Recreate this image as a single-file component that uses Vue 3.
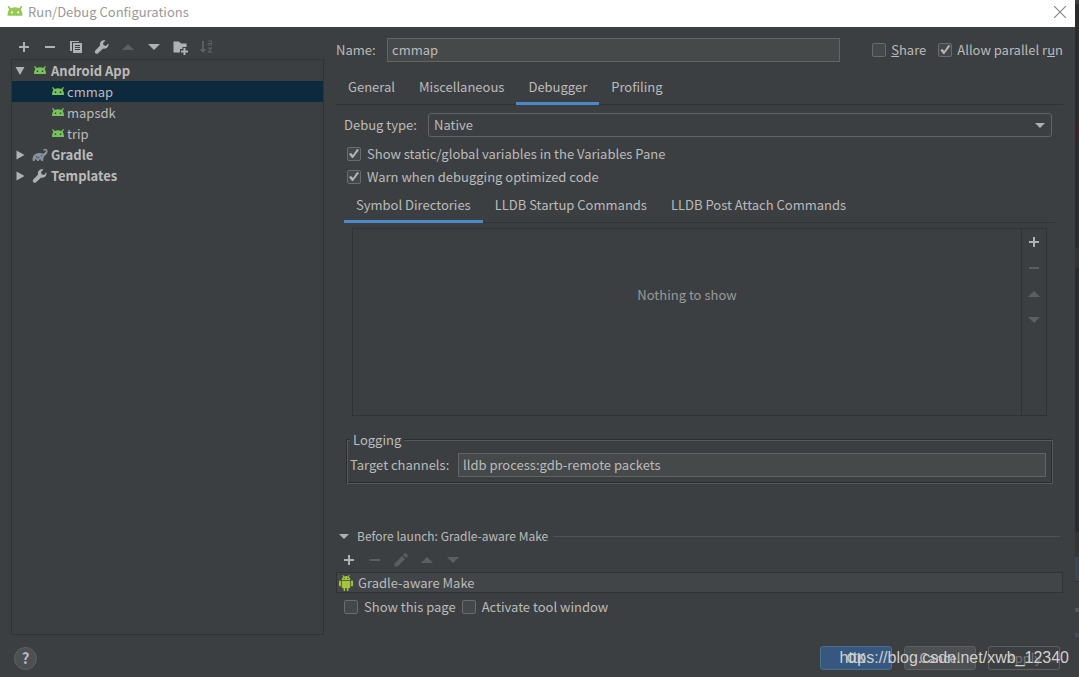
<script setup>
import { h, ref } from 'vue'

const shapes = {
  plus: 'M7 3h2v4h4v2H9v4H7V9H3V7h4z',
  minus: 'M3 7h10v2H3z',
  copy: 'M2 2h9v1H4v9H2zM5 4h9v10H5zM7 6v1h5V6zM7 8v1h5V8zM7 10v1h5v-1z',
  wrench: 'M14.500 4.600l-2.600 2.300-2.300-.7-.6-2.300L11.500 1.400C9.800 1 8.100 1.400 7 2.500 5.900 3.600 5.600 5.200 6.100 6.600L1.300 11.600c-.7.8-.6 1.900.1 2.600.7.700 1.900.7 2.600 0L9.200 9.400c1.400.5 3 .2 4.100-.9 1-1 1.500-2.500 1.200-3.900z',
  up: 'M2 11l6-6 6 6z',
  down: 'M2 5h12l-6 6z',
  folder: 'M1.500 2.500H7l2 2h5.500V8h-4v2H8v3.500H1.500zM11.500 9h2v2.500H16v2h-2.500V16h-2v-2.500H9v-2h2.500z',
  sort: 'M4 2h2v8h2.500L5 14 1.500 10H4zM10 2.500V1.500h3.500l.5.5v4.500h-3.500L9.500 6V4.500L10 4h3V2.500zM10.800 5v.7H13V5zM9.800 8.500H14v1.200L11.500 12.500H14v1.200H9.800v-1.200l2.500-2.800H9.800z',
  edit: 'M1.500 11.500l7.500-7.500 3 3-7.500 7.500h-3zM10 3l1.500-1.500c.5-.5 1-.5 1.500 0L14.500 3c.5.500.5 1 0 1.500L13 6z',
  android: 'M2 3.500l.9-.5 1.900 2A7.500 7.500 0 0 1 8 4.300a7.500 7.500 0 0 1 3.200.7l1.900-2 .9.500-1.400 2.500C13.600 7.200 14 9 14 11H2c0-2 .4-3.800 1.400-5zM4.800 7.500V9h1.400V7.500zM9.800 7.500V9h1.400V7.500z',
  gradle: 'M.7 14c-.5-3 .3-5.700 2.600-7 2.200-1.200 4.800-1.200 6.800-.5 1.500.4 2.300-.5 3.200-1.500.8-.9.7-1.700 0-1.700-.6 0-1 .3-1.300.6L11 3c1.300-1.500 3.400-1.500 4.200-.3 1 1.800-.2 4-1.800 5.500-.8.7-1.500 1.300-1.800 2.300-.3 1-.4 2.300-.5 3.500H9.200c0-1-.4-1.700-1.200-1.700S6.900 13 6.900 14H5c0-1-.4-1.700-1.200-1.700S2.600 13 2.600 14zM9 8.200v1h1.200v-1zM3.600 9.300l1.600 1.900 2.500-.4-.2-.5-2 .2L4.200 9z',
  robot: 'M4.200 0h.9l.9 1.400a5 5 0 0 1 4 0L10.900 0h.9l-1 1.900C11.800 2.600 12.300 3.500 12.300 5H3.700c0-1.500.5-2.400 1.500-3.100zM5.700 3v1h1V3zM9.300 3v1h1V3zM3.700 5.700h8.600v6.500c0 .5-.3.800-.8.800h-1v2.200c0 1-1.700 1-1.700 0V13H7.200v2.200c0 1-1.700 1-1.700 0V13h-1c-.5 0-.8-.3-.8-.8zM1 6.500c0-1.200 1.900-1.200 1.900 0v4c0 1.200-1.900 1.200-1.900 0zM13.100 6.500c0-1.200 1.900-1.200 1.900 0v4c0 1.200-1.900 1.200-1.900 0z',
  opened: 'M3.500 4h9L8 12z',
  closed: 'M4.500 3.500l8 4.500-8 4.500z',
  caret: 'M3 6h10l-5 5z'
}
const Icon = (props) =>
  h('svg', { class: 'icon', viewBox: '0 0 16 16', 'aria-hidden': 'true' }, [
    h('path', { d: shapes[props.name], 'fill-rule': 'evenodd' })
  ])
Icon.props = ['name']

const treeTools = [
  { icon: 'plus', label: 'Add' },
  { icon: 'minus', label: 'Remove' },
  { icon: 'copy', label: 'Copy' },
  { icon: 'wrench', label: 'Edit templates' },
  { icon: 'up', label: 'Move up', off: true },
  { icon: 'down', label: 'Move down' },
  { icon: 'folder', label: 'New folder' },
  { icon: 'sort', label: 'Sort', off: true }
]
const listTools = [
  { icon: 'plus', label: 'Add' },
  { icon: 'minus', label: 'Remove', off: true },
  { icon: 'up', label: 'Move up', off: true },
  { icon: 'down', label: 'Move down', off: true }
]
const taskTools = [...listTools.slice(0, 2), { icon: 'edit', label: 'Edit', off: true }, ...listTools.slice(2)]

const tree = [
  { text: 'Android App', icon: 'android', arrow: 'opened' },
  { text: 'cmmap', icon: 'android', child: true },
  { text: 'mapsdk', icon: 'android', child: true },
  { text: 'trip', icon: 'android', child: true },
  { text: 'Gradle', icon: 'gradle', arrow: 'closed' },
  { text: 'Templates', icon: 'wrench', arrow: 'closed' }
]
const selected = ref('cmmap')
const tabs = ['General', 'Miscellaneous', 'Debugger', 'Profiling']
const tab = ref('Debugger')
const subTabs = ['Symbol Directories', 'LLDB Startup Commands', 'LLDB Post Attach Commands']
const subTab = ref('Symbol Directories')
const name = ref('cmmap')
const channels = ref('lldb process:gdb-remote packets')
const share = ref(false)
const parallel = ref(true)
const showStatics = ref(true)
const warn = ref(true)
const showPage = ref(false)
const activate = ref(false)
</script>

<template>
  <div class="desktop">
    <div class="dialog">
      <header class="titlebar">
        <Icon name="android" class="logo" />
        <span class="title">Run/Debug Configurations</span>
        <button class="close" aria-label="Close">
          <svg viewBox="0 0 12 12" aria-hidden="true"><path d="M1 1l10 10M11 1L1 11" /></svg>
        </button>
      </header>

      <main class="body">
        <aside class="side">
          <div class="tools">
            <button v-for="t in treeTools" :key="t.icon" class="tool" :disabled="t.off" :aria-label="t.label">
              <Icon :name="t.icon" />
            </button>
          </div>
          <ul class="tree">
            <li v-for="n in tree" :key="n.text">
              <button
                class="node"
                :class="{ child: n.child, selected: selected === n.text }"
                @click="selected = n.text"
              >
                <Icon v-if="n.arrow" :name="n.arrow" class="arrow" />
                <Icon :name="n.icon" :class="n.icon" />
                <span>{{ n.text }}</span>
              </button>
            </li>
          </ul>
        </aside>

        <section class="form">
          <div class="name-row">
            <label for="name">Name:</label>
            <input id="name" v-model="name" class="field" type="text" />
            <label class="check share"><input v-model="share" type="checkbox" /><span><u>S</u>hare</span></label>
            <label class="check"><input v-model="parallel" type="checkbox" /><span>Allow parallel r<u>u</u>n</span></label>
          </div>

          <nav class="tabs">
            <button v-for="t in tabs" :key="t" class="tab" :class="{ active: tab === t }" @click="tab = t">{{ t }}</button>
          </nav>

          <div class="debugger">
            <div class="type-row">
              <label for="type">Debug type:</label>
              <div class="combo">
                <select id="type"><option>Native</option></select>
                <Icon name="caret" class="caret" />
              </div>
            </div>
            <div class="options">
              <label class="check"><input v-model="showStatics" type="checkbox" /><span>Show static/global variables in the Variables Pane</span></label>
              <label class="check"><input v-model="warn" type="checkbox" /><span>Warn when debugging optimized code</span></label>
            </div>
            <nav class="tabs sub">
              <button v-for="t in subTabs" :key="t" class="tab" :class="{ active: subTab === t }" @click="subTab = t">{{ t }}</button>
            </nav>
            <div class="symbols">
              <p class="empty">Nothing to show</p>
              <div class="symbol-tools">
                <button v-for="t in listTools" :key="t.icon" class="tool" :disabled="t.off" :aria-label="t.label">
                  <Icon :name="t.icon" />
                </button>
              </div>
            </div>
          </div>

          <fieldset class="logging">
            <legend>Logging</legend>
            <div class="channel-row">
              <label for="channels">Target channels:</label>
              <input id="channels" v-model="channels" class="field" type="text" />
            </div>
          </fieldset>

          <section class="before">
            <h2><Icon name="caret" class="caret" /><span>Before launch: Gradle-aware Make</span></h2>
            <div class="tools">
              <button v-for="t in taskTools" :key="t.icon" class="tool" :disabled="t.off" :aria-label="t.label">
                <Icon :name="t.icon" />
              </button>
            </div>
            <div class="task"><Icon name="robot" class="robot" /><span>Gradle-aware Make</span></div>
            <div class="page-options">
              <label class="check"><input v-model="showPage" type="checkbox" /><span>Show this page</span></label>
              <label class="check"><input v-model="activate" type="checkbox" /><span>Activate tool window</span></label>
            </div>
          </section>
        </section>
      </main>

      <footer class="footer">
        <button class="help" aria-label="Help">?</button>
        <button class="btn primary">OK</button>
        <button class="btn">Cancel</button>
        <button class="btn apply" disabled>Apply</button>
      </footer>
    </div>
    <span class="watermark">https://blog.csdn.net/xwb_12340</span>
  </div>
</template>

<style>
body {
  margin: 0;
  background: #3c3f41;
}
</style>

<style scoped>
* {
  box-sizing: border-box;
}
.desktop {
  position: relative;
  min-height: 100vh;
  display: flex;
  padding-right: 4px;
  color: #bbbbbb;
  font: 13px/20px "Noto Sans CJK SC", "Noto Sans", sans-serif;
  background: linear-gradient(
    #3c3f41 4px, #2b2b2b 4px 122px, #3b2427 122px 140px, #2b2b2b 140px 248px,
    #313335 248px 268px, #2b2b2b 268px 532px, #333537 532px 557px, #3a4558 557px 581px,
    #2f3133 581px 582px, #3c3f41 582px 608px, #55585a 608px 612px, #3c3f41 612px 633px,
    #434c66 633px 637px, #3c3f41 637px
  );
}
button,
input,
select {
  font: inherit;
  color: inherit;
}
button {
  padding: 0;
  border: 0;
  background: none;
}
.dialog {
  flex: 1;
  min-width: 0;
  display: flex;
  flex-direction: column;
  background: #3c3f41;
}
.icon {
  display: block;
  flex: none;
  width: 16px;
  height: 16px;
  fill: #afb1b3;
}
.titlebar {
  display: flex;
  align-items: center;
  height: 27px;
  padding: 0 8px 4px 5px;
  background: #ffffff;
  color: #999999;
}
.logo {
  width: 20px;
  height: 20px;
  margin-right: 3px;
  fill: #97c957;
}
.close {
  margin-left: auto;
  width: 14px;
  height: 14px;
}
.close svg {
  display: block;
  width: 14px;
  height: 14px;
  fill: none;
  stroke: #888888;
}
.body {
  flex: 1;
  display: flex;
  gap: 12px;
  padding: 9px 12px 0 11px;
}
.side {
  width: 313px;
  flex: none;
  display: flex;
  flex-direction: column;
}
.tools {
  display: flex;
}
.tool {
  display: grid;
  place-items: center;
  width: 26px;
  height: 22px;
}
.tool:disabled .icon {
  fill: #5c5e60;
}
.side .tools {
  height: 23px;
}
.tree {
  flex: 1;
  margin: 0;
  padding: 0;
  list-style: none;
  border: 1px solid #323232;
}
.node {
  display: flex;
  align-items: center;
  width: 100%;
  height: 21px;
  gap: 3px;
  font-weight: 700;
}
.node.child {
  padding-left: 38px;
  gap: 1px;
  font-weight: 400;
}
.node.selected {
  background: #0d293e;
}
.arrow {
  margin-right: 1px;
}
.android {
  fill: #76c35c;
}
.gradle {
  fill: #83929c;
}
.form {
  flex: 1;
  min-width: 0;
  display: flex;
  flex-direction: column;
}
.name-row {
  display: flex;
  align-items: center;
  height: 28px;
}
.name-row > label:first-child {
  width: 51px;
}
.field {
  flex: 1;
  min-width: 0;
  height: 24px;
  padding: 0 4px 2px;
  border: 1px solid #646464;
  border-radius: 0;
  background: #45494a;
  outline: none;
}
.check {
  display: flex;
  align-items: center;
  gap: 6px;
}
.check input {
  appearance: none;
  width: 14px;
  height: 14px;
  margin: 0;
  border: 1px solid #6b6b6b;
  border-radius: 2px;
  background: #43494a;
}
.check input:checked::before {
  content: "";
  display: block;
  width: 12px;
  height: 12px;
  background: #b4b6b7;
  clip-path: polygon(1px 6px, 3px 5px, 5px 7px, 9px 1px, 11px 2px, 5px 10px, 4px 10px);
}
.name-row .check {
  gap: 5px;
}
.share {
  margin: 0 12px 0 32px;
}
.tabs {
  display: flex;
  height: 33px;
  margin-top: 8px;
  border-bottom: 1px solid #323232;
}
.tab {
  height: 33px;
  padding: 0 12px 1px;
  border-bottom: 3px solid transparent;
  white-space: nowrap;
}
.tab.active {
  border-bottom-color: #4a88c7;
}
.debugger {
  padding: 8px 8px 0;
}
.type-row {
  display: flex;
  align-items: center;
  padding-right: 3px;
}
.type-row label {
  width: 84px;
}
.combo {
  position: relative;
  flex: 1;
}
select {
  display: block;
  appearance: none;
  width: 100%;
  height: 24px;
  padding: 0 5px;
  border: 1px solid #646464;
  border-radius: 3px;
  background: #3c3f41;
  outline: none;
}
.caret {
  fill: #afb1b3;
}
.combo .caret {
  position: absolute;
  right: 4px;
  top: 4px;
  pointer-events: none;
}
.options {
  display: grid;
  gap: 3px;
  padding: 7px 3px 0;
}
.sub {
  margin-top: 3px;
}
.symbols {
  display: flex;
  height: 188px;
  margin: 5px 8px 0;
  border: 1px solid #323232;
}
.empty {
  flex: 1;
  margin: 0;
  padding-top: 56px;
  text-align: center;
  color: #999999;
}
.symbol-tools {
  border-left: 1px solid #323232;
}
.symbol-tools .tool {
  width: 24px;
  height: 26px;
}
.logging {
  margin: 14px 10px 0 11px;
  padding: 3px 6px 6px 2px;
  border: 1px solid #55585a;
  box-shadow: -1px -1px 0 #2b2d2e, inset -1px -1px 0 #2b2d2e;
}
.logging legend {
  padding: 0 3px;
  background: #3c3f41;
}
.channel-row {
  display: flex;
  align-items: center;
}
.channel-row label {
  width: 108px;
}
.before {
  margin-top: 42px;
}
.before h2 {
  display: flex;
  align-items: center;
  gap: 5px;
  margin: 0;
  padding-right: 3px;
  font-size: 12px;
  font-weight: 400;
}
.before h2::after {
  content: "";
  flex: 1;
  height: 1px;
  background: #515456;
}
.before .tools {
  padding: 3px 0 1px;
}
.task {
  display: flex;
  align-items: center;
  gap: 4px;
  height: 21px;
  padding-left: 1px;
  border: 1px solid #323232;
  background: #414547;
}
.robot {
  fill: #a4c639;
}
.page-options {
  display: flex;
  gap: 6px;
  padding: 4px 8px 0;
}
.footer {
  display: flex;
  align-items: center;
  gap: 12px;
  height: 42px;
  padding: 4px 15px 0 14px;
}
.help {
  width: 23px;
  height: 23px;
  margin-right: auto;
  border: 1px solid #5e6162;
  border-radius: 50%;
  background: #4c5052;
  font-size: 15px;
  font-weight: 700;
}
.btn {
  width: 72px;
  height: 24px;
  border: 1px solid #5e6060;
  border-radius: 3px;
  background: #4c5052;
}
.primary {
  border-color: #4c708c;
  background: #365880;
  font-weight: 700;
}
.apply {
  background: #3c3f41;
  color: #777777;
}
.watermark {
  position: absolute;
  right: 10px;
  bottom: 9px;
  font: 16px/20px "Liberation Sans", sans-serif;
  color: #d0d0d0;
  pointer-events: none;
}
</style>
